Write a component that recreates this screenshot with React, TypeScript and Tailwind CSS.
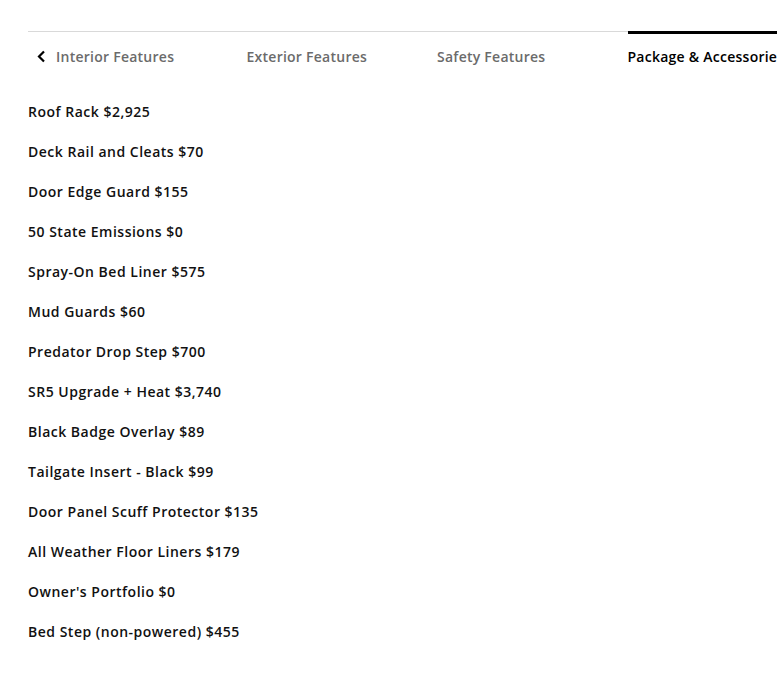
import React from "react";

const items = [
  "Roof Rack $2,925",
  "Deck Rail and Cleats $70",
  "Door Edge Guard $155",
  "50 State Emissions $0",
  "Spray-On Bed Liner $575",
  "Mud Guards $60",
  "Predator Drop Step $700",
  "SR5 Upgrade + Heat $3,740",
  "Black Badge Overlay $89",
  "Tailgate Insert - Black $99",
  "Door Panel Scuff Protector $135",
  "All Weather Floor Liners $179",
  "Owner's Portfolio $0",
  "Bed Step (non-powered) $455",
];

const tabs = ["Interior Features", "Exterior Features", "Safety Features", "Package & Accessories"];

export default function App() {
  return (
    <div className="w-[777px] h-[698px] overflow-hidden bg-white" style={{ fontFamily: "'Open Sans', sans-serif" }}>
      <div className="pt-[31px] pl-[28px]">
        <div className="border-t border-[#d9d9d9] flex items-start">
          <button className="w-[28px] shrink-0 h-[49px] flex items-center pl-[9px] text-black">
            <svg width="9" height="13" viewBox="0 0 9 13" fill="none">
              <path d="M7 1.5L2 6.5L7 11.5" stroke="currentColor" strokeWidth="2.2" />
            </svg>
          </button>
          {tabs.map((t, i) => {
            const active = i === 3;
            return (
              <div
                key={t}
                className={`w-[190.5px] shrink-0 whitespace-nowrap h-[49px] flex items-center text-[14px] font-semibold tracking-[0.25px] ${
                  active ? "text-black border-t-[3px] border-black -mt-px" : "text-[#6b6b6b]"
                }`}
              >
                <span className={active ? "-mt-[2px]" : ""}>{t}</span>
              </div>
            );
          })}
        </div>
        <div className="mt-[21px] flex flex-col gap-[20px]">
          {items.map((it) => (
            <div key={it} className="text-[14px] leading-[20px] font-semibold tracking-[0.5px] text-[#111]">
              {it}
            </div>
          ))}
        </div>
      </div>
    </div>
  );
}
